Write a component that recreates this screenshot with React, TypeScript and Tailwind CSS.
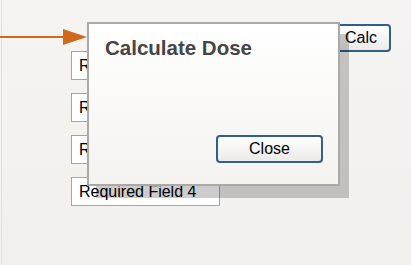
import React from 'react';

const fields = ['Required Field 1', 'Required Field 2', 'Required Field 3', 'Required Field 4'];

const App: React.FC = () => {
  return (
    <div
      className="relative w-[411px] h-[265px] overflow-hidden bg-gradient-to-b from-[#f5f4f2] to-[#f1f0ed] text-black"
      style={{ fontFamily: '"Liberation Sans", Arial, sans-serif' }}
    >
      {/* page body */}
      <div className="flex h-full border-l border-[#e2e2e0] ml-[1px]">
        <div className="flex flex-col gap-[13px] pl-[69px] pt-[51px]">
          {fields.map((f) => (
            <div
              key={f}
              className="w-[149px] h-[29px] flex items-center pl-[7px] bg-white border border-[#8fa9c6] text-[16px] leading-none"
            >
              {f}
            </div>
          ))}
        </div>

        <div className="flex-1 flex justify-end pt-[24px] pr-[20px]">
          <button className="w-[64px] h-[28px] rounded-[4px] border-2 border-[#2f5f8c] bg-gradient-to-b from-white to-[#ecebe8] text-[16px] leading-none pl-[4px]">
            Calc
          </button>
        </div>
      </div>

      {/* annotation arrow */}
      <svg className="absolute left-0 top-[28px]" width="90" height="20" viewBox="0 0 90 20">
        <line x1="0" y1="9" x2="68" y2="9" stroke="#cf6a1c" strokeWidth="2" />
        <polygon points="63,1 87,9 63,17" fill="#cf6a1c" />
      </svg>

      {/* dialog */}
      <div className="absolute left-[87px] top-[22px] w-[253px] h-[164px] border-2 border-[#a9a9a9] bg-gradient-to-b from-white to-[#f4f3f0] shadow-[9px_12px_0_rgba(0,0,0,0.2)] flex flex-col">
        <h2 className="pl-[16px] pt-[14px] text-[20.5px] leading-[20px] font-bold text-[#454545]">
          Calculate Dose
        </h2>
        <div className="flex-1" />
        <div className="flex justify-end pr-[15px] pb-[21px]">
          <button className="w-[107px] h-[28px] rounded-[4px] border-2 border-[#2f5f8c] bg-gradient-to-b from-white to-[#ebeae7] text-[16px] leading-none">
            Close
          </button>
        </div>
      </div>
    </div>
  );
};

export default App;
